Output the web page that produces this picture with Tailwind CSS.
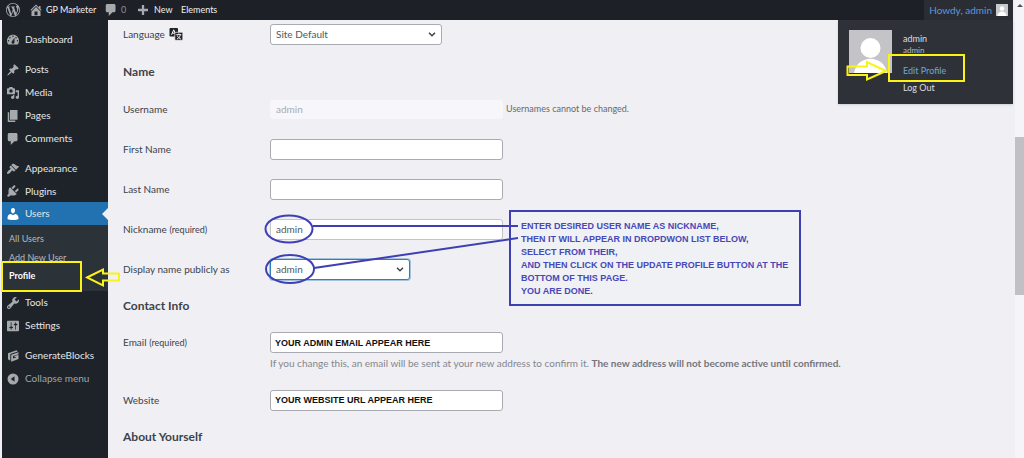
<!DOCTYPE html>
<html lang="en">
<head>
<meta charset="utf-8">
<meta name="viewport" content="width=device-width, initial-scale=1">
<title>Profile</title>
<script src="https://cdn.jsdelivr.net/npm/@tailwindcss/browser@4"></script>
</head>
<body class="relative flex min-h-screen flex-col overflow-x-hidden bg-[#f0eff4] font-[Lato,'Open_Sans',sans-serif] text-[10px] text-[#3c434a]">

<header class="flex h-5 items-center bg-[#1d2127] pl-1.5 text-[9px] text-[#eef0f2]">
  <a href="#" aria-label="About WordPress" class="w-6"><svg class="size-3.5 fill-[#a7aaad]" viewBox="0 0 20 20"><path d="M20 10c0-5.51-4.49-10-10-10C4.48 0 0 4.49 0 10c0 5.52 4.48 10 10 10 5.51 0 10-4.48 10-10zM7.78 15.37L4.37 6.22c.55-.02 1.17-.08 1.17-.08.5-.06.44-1.13-.06-1.11 0 0-1.45.11-2.37.11-.18 0-.37 0-.58-.01C4.12 2.69 6.87 1.11 10 1.11c2.33 0 4.45.87 6.05 2.34-.68-.11-1.65.39-1.65 1.58 0 .74.45 1.36.9 2.1.35.61.55 1.36.55 2.46 0 1.49-1.4 5-1.4 5l-3.03-8.37c.54-.02.82-.17.82-.17.5-.05.44-1.25-.06-1.22 0 0-1.44.12-2.38.12-.87 0-2.33-.12-2.33-.12-.5-.03-.56 1.2-.06 1.22l.92.08 1.26 3.41zM17.41 10c.24-.64.74-1.87.43-4.25.7 1.29 1.05 2.71 1.05 4.25 0 3.29-1.73 6.24-4.4 7.78.97-2.59 1.94-5.2 2.92-7.78zM6.1 18.09C3.12 16.65 1.11 13.53 1.11 10c0-1.3.23-2.48.72-3.59C3.25 10.3 4.67 14.2 6.1 18.09zm4.03-6.63l2.58 6.98c-.86.29-1.76.45-2.71.45-.79 0-1.57-.11-2.29-.33.81-2.38 1.62-4.74 2.42-7.1z"/></svg></a>
  <a href="#" class="flex w-[75px] items-center gap-1 whitespace-nowrap"><svg class="size-3 shrink-0 fill-[#a7aaad]" viewBox="2 2 16 16"><path d="M16 8.5l1.53 1.53-1.06 1.06L10 4.6l-6.47 6.49-1.06-1.06L10 2.5l4 4v-2h2v4zm-6-2.46l6 5.99V18H4v-5.97zM12 17v-5H8v5h4z"/></svg>GP Marketer</a>
  <a href="#" class="flex w-[33px] items-center gap-1 text-[#8c9096]"><svg class="size-3 fill-[#a7aaad]" viewBox="2 2 16 16"><path d="M5 2h9c1.1 0 2 .9 2 2v7c0 1.1-.9 2-2 2h-2l-5 5v-5H5c-1.1 0-2-.9-2-2V4c0-1.1.9-2 2-2z"/></svg>0</a>
  <a href="#" class="flex w-[43px] items-center gap-1.5"><svg class="size-2.5 fill-[#a7aaad]" viewBox="4 2 13 13"><path d="M17 7v3h-5v5H9v-5H4V7h5V2h3v5h5z"/></svg>New</a>
  <a href="#">Elements</a>
  <a href="#" class="mr-[11px] ml-auto flex h-5 items-center gap-1 bg-[#2a2d33] px-[5px] text-[10px] text-[#5b9adb]">Howdy, admin
    <svg class="size-3" viewBox="0 0 12 12"><rect width="12" height="12" fill="#c8c9cc"/><circle cx="6" cy="4.5" r="2.3" fill="#fff"/><path d="M1.5 12c0-6 9-6 9 0z" fill="#fff"/></svg>
  </a>
</header>

<div class="flex flex-1">
  <nav aria-label="Main menu" class="ml-0.5 w-[106px] shrink-0 bg-[#1d2329] pt-2 text-[#e4e6e8]">
    <ul>
      <li><a href="#" class="flex h-[23px] items-center gap-1.5 pl-[5px]"><svg class="size-3 fill-[#a7aaad]" viewBox="2 2 16 16"><path d="M3.76 16h12.48c1.1-1.37 1.76-3.11 1.76-5 0-4.42-3.58-8-8-8s-8 3.58-8 8c0 1.89.66 3.63 1.76 5zM10 4c.55 0 1 .45 1 1s-.45 1-1 1-1-.45-1-1 .45-1 1-1zM6 6c.55 0 1 .45 1 1s-.45 1-1 1-1-.45-1-1 .45-1 1-1zm8 0c.55 0 1 .45 1 1s-.45 1-1 1-1-.45-1-1 .45-1 1-1zm-5.37 5.55L12 7v6c0 1.1-.9 2-2 2s-2-.9-2-2c0-.57.24-1.08.63-1.45zM4 10c.55 0 1 .45 1 1s-.45 1-1 1-1-.45-1-1 .45-1 1-1zm12 0c.55 0 1 .45 1 1s-.45 1-1 1-1-.45-1-1 .45-1 1-1z"/></svg>Dashboard</a></li>
      <li class="mt-[7px]"><a href="#" class="flex h-[23px] items-center gap-1.5 pl-[5px]"><svg class="size-3 fill-[#a7aaad]" viewBox="1 1 18 18"><path d="M10.44 3.02l1.82-1.82 6.36 6.35-1.83 1.82c-1.05-.68-2.48-.57-3.41.36l-.75.75c-.92.93-1.04 2.35-.35 3.41l-1.83 1.82-2.41-2.41-2.8 2.79c-.42.42-3.38 2.71-3.8 2.29s1.86-3.39 2.28-3.81l2.79-2.79L4.1 9.36l1.83-1.82c1.05.69 2.48.57 3.4-.36l.75-.75c.93-.92 1.05-2.35.36-3.41z"/></svg>Posts</a></li>
      <li><a href="#" class="flex h-[23px] items-center gap-1.5 pl-[5px]"><svg class="size-3 fill-[#a7aaad]" viewBox="1 1 18 18"><path d="M13 11V4c0-.55-.45-1-1-1h-1.67L9 1H5L3.67 3H2c-.55 0-1 .45-1 1v7c0 .55.45 1 1 1h10c.55 0 1-.45 1-1zM7 4.5c1.38 0 2.5 1.12 2.5 2.5S8.38 9.5 7 9.5 4.5 8.38 4.5 7 5.62 4.5 7 4.5zM14 6h5v10.5c0 1.38-1.12 2.5-2.5 2.5S14 17.88 14 16.5s1.12-2.5 2.5-2.5c.17 0 .34.02.5.05V9h-3V6zm-4 8.05V13h2v3.5c0 1.38-1.12 2.5-2.5 2.5S7 17.88 7 16.5 8.12 14 9.5 14c.17 0 .34.02.5.05z"/></svg>Media</a></li>
      <li><a href="#" class="flex h-[23px] items-center gap-1.5 pl-[5px]"><svg class="size-3 fill-[#a7aaad]" viewBox="2 2 16 16"><path d="M6 15V2h10v13H6zm-1 1h8v2H3V5h2v11z"/></svg>Pages</a></li>
      <li><a href="#" class="flex h-[23px] items-center gap-1.5 pl-[5px]"><svg class="size-3 fill-[#a7aaad]" viewBox="2 2 16 16"><path d="M5 2h9c1.1 0 2 .9 2 2v7c0 1.1-.9 2-2 2h-2l-5 5v-5H5c-1.1 0-2-.9-2-2V4c0-1.1.9-2 2-2z"/></svg>Comments</a></li>
      <li class="mt-[7px]"><a href="#" class="flex h-[23px] items-center gap-1.5 pl-[5px]"><svg class="size-3 fill-[#a7aaad]" viewBox="1 1 18 18"><path d="M14.48 11.06L7.41 3.99l1.5-1.5c.5-.56 2.3-.47 3.51.32 1.21.8 1.43 1.28 2.91 2.1 1.18.64 2.45 1.26 4.45.85zm-.71.71L6.7 4.7 4.93 6.47c-.39.39-.39 1.02 0 1.41l1.06 1.06c.39.39.39 1.03 0 1.42-.6.6-1.43 1.11-2.21 1.69-.35.26-.7.53-1.01.84C1.43 14.23.4 16.08 1.4 17.07c.99 1 2.84-.03 4.18-1.36.31-.31.58-.66.85-1.02.57-.78 1.08-1.61 1.69-2.21.39-.39 1.02-.39 1.41 0l1.06 1.06c.39.39 1.02.39 1.41 0z"/></svg>Appearance</a></li>
      <li><a href="#" class="flex h-[22px] items-center gap-1.5 pl-[5px]"><svg class="size-3 fill-[#a7aaad]" viewBox="2 2 16 16"><path d="M13.11 4.36L9.87 7.6 8 5.73l3.24-3.24c.35-.34 1.05-.2 1.56.32.52.51.66 1.21.31 1.55zm-8 1.77l.91-1.12 9.01 9.01-1.19.84c-.71.71-2.63 1.16-3.82 1.16H6.14L4.9 17.26c-.59.59-1.54.59-2.12 0-.59-.58-.59-1.53 0-2.12l1.24-1.24v-3.88c0-1.13.4-3.19 1.09-3.89zm7.26 3.97l3.24-3.24c.34-.35 1.04-.21 1.55.31.52.51.66 1.21.31 1.55l-3.24 3.25z"/></svg>Plugins</a></li>
      <li>
        <a href="#" class="flex h-[23px] items-center gap-1.5 bg-[#2271b1] pl-[5px]"><svg class="size-3 fill-white" viewBox="2 2 16 16"><path d="M10 9.25c-2.27 0-2.73-3.44-2.73-3.44C7 4.02 7.82 2 9.97 2c2.16 0 2.98 2.02 2.71 3.81 0 0-.41 3.44-2.68 3.44zm0 2.57L12.72 10c2.39 0 4.52 2.33 4.52 4.53v2.49s-3.65 1.13-7.24 1.13c-3.65 0-7.24-1.13-7.24-1.13v-2.49c0-2.25 1.94-4.48 4.47-4.48z"/></svg>Users<svg class="ml-auto h-3 w-1.5 fill-[#f0eff4]" viewBox="0 0 6 12"><path d="M6 0v12L0 6z"/></svg></a>
        <ul class="bg-[#2c3338] pt-[5px] pb-1.5 pl-[7px] text-[9px] text-[#b4b9be]">
          <li><a href="#" class="flex h-[18px] items-center">All Users</a></li>
          <li><a href="#" class="flex h-[19px] items-center">Add New User</a></li>
          <li><a href="#" aria-current="page" class="flex h-[18px] items-center font-bold text-white">Profile</a></li>
        </ul>
      </li>
      <li><a href="#" class="flex h-[23px] items-center gap-1.5 pl-[5px]"><svg class="size-3 fill-[#a7aaad]" viewBox="2 2 16 16"><path d="M16.68 9.77c-1.34 1.34-3.3 1.67-4.95.99l-5.41 6.52c-.99.99-2.59.99-3.58 0s-.99-2.59 0-3.57l6.52-5.42c-.68-1.65-.35-3.61.99-4.95 1.28-1.28 3.12-1.62 4.72-1.06l-2.89 2.89 2.82 2.82 2.86-2.87c.53 1.58.18 3.39-1.08 4.65zM3.81 16.21c.4.39 1.04.39 1.43 0 .4-.4.4-1.04 0-1.43-.39-.4-1.03-.4-1.43 0-.39.39-.39 1.03 0 1.43z"/></svg>Tools</a></li>
      <li><a href="#" class="flex h-[23px] items-center gap-1.5 pl-[5px]"><svg class="size-3 fill-[#a7aaad]" viewBox="2 2 16 16"><path d="M18 16V4c0-.55-.45-1-1-1H3c-.55 0-1 .45-1 1v12c0 .55.45 1 1 1h14c.55 0 1-.45 1-1zM8 11h1c.55 0 1 .45 1 1s-.45 1-1 1H8v1.5c0 .28-.22.5-.5.5s-.5-.22-.5-.5V13H6c-.55 0-1-.45-1-1s.45-1 1-1h1V5.5c0-.28.22-.5.5-.5s.5.22.5.5V11zm5-2h-1c-.55 0-1-.45-1-1s.45-1 1-1h1V5.500c0-.28.22-.5.5-.5s.5.22.5.5V7h1c.55 0 1 .45 1 1s-.45 1-1 1h-1v5.500c0 .28-.22.5-.5.5s-.5-.22-.5-.5V9z"/></svg>Settings</a></li>
      <li class="mt-[7px]"><a href="#" class="flex h-[23px] items-center gap-1.5 pl-[5px]"><svg class="size-3 fill-[#a7aaad]" viewBox="0 0 12 12"><path d="M1 3.200L9.500.3l1.300 1.200L3.300 4v6.800L1 9.200z"/><path d="M4.200 4.700l7.300-2.400v1.900L6 6v2.600l3-1V6.800l-1.600.5V6l4.100-1.300v4.200l-7.300 2.800z"/></svg>GenerateBlocks</a></li>
      <li><button type="button" class="flex h-[23px] items-center gap-1.5 pl-[5px] text-[#a0a5aa]"><svg class="size-3" viewBox="0 0 12 12"><circle cx="6" cy="6" r="5.500" fill="#a7aaad"/><path d="M7.500 3.300v5.400L3.800 6z" fill="#1d2329"/></svg>Collapse menu</button></li>
    </ul>
  </nav>

  <main class="min-w-0 flex-1 pl-[15px]">
    <form>
      <div class="flex h-7 items-center">
        <label for="language" class="flex w-[147px] items-center gap-1">Language
          <svg class="size-3.5" viewBox="0 0 14 14"><rect x=".5" y="1" width="8.500" height="8.500" rx="1" fill="#1d2327"/><path d="M2.500 7.800l2.200-5 2.200 5M3.400 6.200h2.700" stroke="#fff" fill="none"/><rect x="5.800" y="5.300" width="8" height="8" rx="1" fill="#1d2327" stroke="#f0eff4" stroke-width=".7"/><path d="M7.300 7.600h5M9.800 6.500v1M8 12c2-.8 3-2.300 3.300-4.300M8.300 8.500c.6 1.800 2 3 3.700 3.500" stroke="#fff" stroke-width=".9" fill="none"/></svg>
        </label>
        <div class="relative w-[172px]">
          <select id="language" class="h-[21px] w-full appearance-none rounded-[3px] border border-[#a9abb2] bg-white pl-[5px] text-[10px] text-[#50575e]"><option>Site Default</option></select>
          <svg class="pointer-events-none absolute top-2 right-1.5 h-[5px] w-2" viewBox="0 0 8 5"><path d="M1 .8l3 3 3-3" fill="none" stroke="#3c434a" stroke-width="1.500"/></svg>
        </div>
      </div>
      <h2 class="flex h-[41px] items-center pt-1.5 text-[12px] font-bold">Name</h2>
      <div class="flex h-10 items-center"><label for="username" class="w-[147px]">Username</label><input id="username" disabled value="admin" class="h-[19px] w-[233px] rounded-[3px] bg-[#f7f6fb] px-1.5 text-[10px] text-[#a9acb2]"><span class="pl-[3px] text-[9px] text-[#646970]">Usernames cannot be changed.</span></div>
      <div class="flex h-10 items-center"><label for="first" class="w-[147px]">First Name</label><input id="first" class="h-[21px] w-[233px] rounded-[3px] border border-[#a9abb2] bg-white px-[5px]"></div>
      <div class="flex h-10 items-center"><label for="last" class="w-[147px]">Last Name</label><input id="last" class="h-[21px] w-[233px] rounded-[3px] border border-[#a9abb2] bg-white px-[5px]"></div>
      <div class="flex h-10 items-center"><label for="nickname" class="w-[147px]">Nickname <span class="text-[9px]">(required)</span></label><input id="nickname" value="admin" required class="h-[21px] w-[233px] rounded-[3px] border border-[#c3c4c9] bg-white px-[5px] text-[#50575e]"></div>
      <div class="flex h-10 items-center"><label for="display" class="w-[147px]">Display name publicly as</label>
        <div class="relative w-[140px]">
          <select id="display" class="h-[21px] w-full appearance-none rounded-[3px] border border-[#2f7fb8] bg-white pl-[5px] text-[10px] text-[#50575e] ring-1 ring-[#2f7fb8]/40"><option>admin</option></select>
          <svg class="pointer-events-none absolute top-2 right-1.5 h-[5px] w-2" viewBox="0 0 8 5"><path d="M1 .8l3 3 3-3" fill="none" stroke="#3c434a" stroke-width="1.500"/></svg>
        </div>
      </div>
      <h2 class="flex h-[34px] items-center text-[12px] font-bold">Contact Info</h2>
      <div class="flex h-[57px] items-start pt-[9px]"><label for="email" class="w-[147px] shrink-0 leading-[21px]">Email <span class="text-[9px]">(required)</span></label>
        <div>
          <input id="email" value="YOUR ADMIN EMAIL APPEAR HERE" class="block h-[21px] w-[233px] rounded-[3px] border border-[#a9abb2] bg-white px-1 font-['Liberation_Sans',sans-serif] text-[9px] font-bold text-[#111]">
          <p class="leading-5 text-[#85868c]">If you change this, an email will be sent at your new address to confirm it. <strong class="font-bold text-[#74767c]">The new address will not become active until confirmed.</strong></p>
        </div>
      </div>
      <div class="flex h-10 items-center"><label for="website" class="w-[147px]">Website</label><input id="website" value="YOUR WEBSITE URL APPEAR HERE" class="h-[21px] w-[233px] rounded-[3px] border border-[#a9abb2] bg-white px-1 font-['Liberation_Sans',sans-serif] text-[9px] font-bold text-[#111]"></div>
      <h2 class="flex h-[34px] items-center text-[12px] font-bold">About Yourself</h2>
    </form>
  </main>
</div>

<!-- Page scroll bar -->
<div class="absolute inset-y-0 right-0 w-[9px] bg-[#f5f4f8]">
  <svg class="absolute top-1 left-0.5 h-[3px] w-1.5 fill-[#505257]" viewBox="0 0 6 3"><path d="M0 3l3-3 3 3z"/></svg>
  <div class="mt-[137px] h-[158px] bg-[#c1c0c5]"></div>
</div>
<div class="absolute top-0 right-[9px] h-5 w-0.5 bg-[#f0eff4]"></div>

<!-- Account menu -->
<div class="absolute top-5 right-[11px] flex w-[175px] gap-[11px] bg-[#2e3238] px-[11px] pt-2.5 pb-2 text-[#dcdee0] shadow-sm">
  <svg class="h-[43px] w-[43px] shrink-0" viewBox="0 0 43 43"><rect width="43" height="43" fill="#c3c3c8"/><circle cx="21.500" cy="18" r="10" fill="#fff"/><path d="M5 43c3-19 30-19 33 0z" fill="#fff"/></svg>
  <div class="flex flex-col text-[9px]">
    <span class="leading-[18px]">admin</span>
    <span class="text-[8px] leading-[4px] text-[#b4b9be]">admin</span>
    <a href="#" class="mt-2.5 leading-[18px] text-[#6fa5dc]">Edit Profile</a>
    <a href="#" class="leading-4">Log Out</a>
  </div>
</div>

<!-- Blue callout with its pointers -->
<div class="absolute top-[210px] left-[509px] h-24 w-[292px] border-2 border-[#3f3fb5] bg-[#eff1f4] pt-2 pl-2.5 font-['Liberation_Sans',sans-serif] text-[9px] leading-[13px] font-bold whitespace-nowrap text-[#4848b8]">ENTER DESIRED USER NAME AS NICKNAME,<br>THEN IT WILL APPEAR IN DROPDWON LIST BELOW,<br>SELECT FROM THEIR,<br>AND THEN CLICK ON THE UPDATE PROFILE BUTTON AT THE<br>BOTTOM OF THIS PAGE.<br>YOU ARE DONE.</div>
<svg class="pointer-events-none absolute top-[205px] left-[260px] h-[90px] w-[270px] fill-none stroke-[#3f3fb5] stroke-2" viewBox="0 0 270 90"><ellipse cx="29" cy="24" rx="23.500" ry="13.500"/><ellipse cx="30" cy="64" rx="24" ry="14"/><path d="M53 21h205M54 63L258 33"/></svg>

<!-- Yellow highlights -->
<div class="pointer-events-none absolute top-[261px] left-[1px] h-[31px] w-[81px] border-2 border-[#fbf315]"></div>
<svg class="pointer-events-none absolute top-[267px] left-[85px] h-[21px] w-9 fill-none stroke-[#fbf315] stroke-2" viewBox="0 0 36 21"><path d="M2 10.500L18 2.500v4h16v7H18v5z"/></svg>
<div class="pointer-events-none absolute top-[54px] right-[59px] h-7 w-[77px] border-2 border-[#fbf315]"></div>
<svg class="pointer-events-none absolute top-[60px] right-[136px] h-[22px] w-[42px] fill-none stroke-[#fbf315] stroke-2" viewBox="0 0 42 22"><path d="M40 11L21 2v4.500H1.500v8.500H21v4.500z"/></svg>
</body>
</html>
